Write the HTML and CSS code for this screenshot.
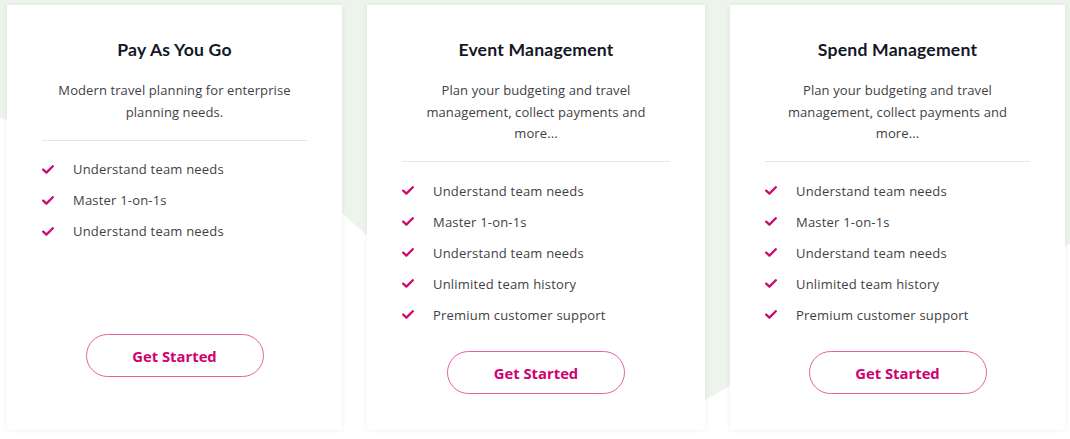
FILE: index.html
```html
<!DOCTYPE html>
<html lang="en">
<head>
<meta charset="utf-8">
<title>Pricing</title>
<link rel="stylesheet" href="styles.css">
</head>
<body>
<div class="page">
  <div class="backdrop" aria-hidden="true"></div>
  <div class="cards">
    <div class="card card--short">
      <h2 class="card-title">Pay As You Go</h2>
      <p class="card-desc">Modern travel planning for enterprise<br>planning needs.</p>
      <hr class="divider">
      <ul class="features">
        <li><svg class="check" viewBox="0 0 12 9"><path d="M1.2 4.6 L4.4 7.6 L10.8 1.2"/></svg>Understand team needs</li>
        <li><svg class="check" viewBox="0 0 12 9"><path d="M1.2 4.6 L4.4 7.6 L10.8 1.2"/></svg>Master 1-on-1s</li>
        <li><svg class="check" viewBox="0 0 12 9"><path d="M1.2 4.6 L4.4 7.6 L10.8 1.2"/></svg>Understand team needs</li>
      </ul>
      <button class="btn">Get Started</button>
    </div>
    <div class="card">
      <h2 class="card-title">Event Management</h2>
      <p class="card-desc">Plan your budgeting and travel<br>management, collect payments and<br>more...</p>
      <hr class="divider">
      <ul class="features">
        <li><svg class="check" viewBox="0 0 12 9"><path d="M1.2 4.6 L4.4 7.6 L10.8 1.2"/></svg>Understand team needs</li>
        <li><svg class="check" viewBox="0 0 12 9"><path d="M1.2 4.6 L4.4 7.6 L10.8 1.2"/></svg>Master 1-on-1s</li>
        <li><svg class="check" viewBox="0 0 12 9"><path d="M1.2 4.6 L4.4 7.6 L10.8 1.2"/></svg>Understand team needs</li>
        <li><svg class="check" viewBox="0 0 12 9"><path d="M1.2 4.6 L4.4 7.6 L10.8 1.2"/></svg>Unlimited team history</li>
        <li><svg class="check" viewBox="0 0 12 9"><path d="M1.2 4.6 L4.4 7.6 L10.8 1.2"/></svg>Premium customer support</li>
      </ul>
      <button class="btn">Get Started</button>
    </div>
    <div class="card">
      <h2 class="card-title">Spend Management</h2>
      <p class="card-desc">Plan your budgeting and travel<br>management, collect payments and<br>more...</p>
      <hr class="divider">
      <ul class="features">
        <li><svg class="check" viewBox="0 0 12 9"><path d="M1.2 4.6 L4.4 7.6 L10.8 1.2"/></svg>Understand team needs</li>
        <li><svg class="check" viewBox="0 0 12 9"><path d="M1.2 4.6 L4.4 7.6 L10.8 1.2"/></svg>Master 1-on-1s</li>
        <li><svg class="check" viewBox="0 0 12 9"><path d="M1.2 4.6 L4.4 7.6 L10.8 1.2"/></svg>Understand team needs</li>
        <li><svg class="check" viewBox="0 0 12 9"><path d="M1.2 4.6 L4.4 7.6 L10.8 1.2"/></svg>Unlimited team history</li>
        <li><svg class="check" viewBox="0 0 12 9"><path d="M1.2 4.6 L4.4 7.6 L10.8 1.2"/></svg>Premium customer support</li>
      </ul>
      <button class="btn">Get Started</button>
    </div>
  </div>
</div>
</body>
</html>
```

FILE: styles.css
```css
* { box-sizing: border-box; }
html, body { margin: 0; padding: 0; background: #ffffff; }
body { width: 1070px; height: 439px; overflow: hidden; font-family: "Open Sans", "Noto Sans", sans-serif; }

.page { position: relative; width: 1070px; height: 439px; }

.backdrop {
  position: absolute;
  inset: 0;
  background: #edf4eb;
  clip-path: polygon(0 0, 1070px 0, 1070px 244px, 730px 386px, 705px 400px, 365px 234px, 341px 212px, 0 118px);
}

.cards {
  position: relative;
  display: flex;
  gap: 25px;
  padding: 5px 0 0 7px;
  align-items: stretch;
}

.card {
  width: 335px;
  background: #ffffff;
  box-shadow: 0 0 5px rgba(0, 0, 0, 0.07);
  display: flex;
  flex-direction: column;
  align-items: center;
  padding: 33px 35px 36px;
}
.card:nth-child(2) { width: 338px; }
.card--short { padding-bottom: 53px; }

.card-title {
  margin: 0;
  font-family: "Lato", "Noto Sans", sans-serif;
  font-weight: 700;
  font-size: 17.6px;
  line-height: 24px;
  color: #141726;
  letter-spacing: 0.2px;
}

.card-desc {
  margin: 18px 0 0;
  text-align: center;
  font-size: 13px;
  line-height: 21.5px;
  color: #3f3f46;
  letter-spacing: 0.1px;
}

.divider {
  align-self: stretch;
  border: 0;
  border-top: 1px solid #e6e6e6;
  margin: 16.5px 0 0;
}

.features {
  align-self: stretch;
  list-style: none;
  margin: 13px 0 0;
  padding: 0;
  flex: 1;
}
.features li {
  display: flex;
  align-items: center;
  height: 31px;
  font-size: 13px;
  color: #3f3f46;
  letter-spacing: 0.2px;
}
.check {
  width: 12px;
  height: 9px;
  margin: 0 19px 0 0;
  flex: none;
  fill: none;
  stroke: #cc0a70;
  stroke-width: 2.3;
  stroke-linecap: round;
  stroke-linejoin: round;
}

.btn {
  margin-top: 21px;
  width: 178px;
  height: 43px;
  border-radius: 22px;
  border: 1.5px solid #e062a6;
  background: #ffffff;
  color: #d1006f;
  font-family: "Open Sans", "Noto Sans", sans-serif;
  font-weight: 700;
  font-size: 14.8px;
  padding: 0;
}
```
